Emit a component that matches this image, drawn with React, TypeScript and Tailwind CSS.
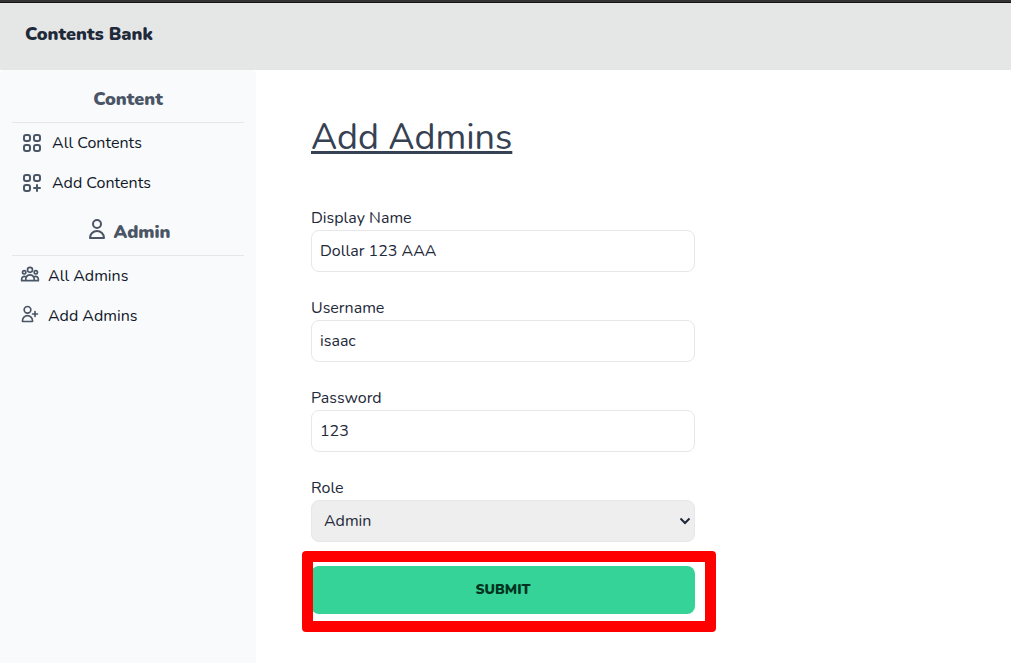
import type { ReactNode } from "react";
import {
  HiOutlineUser,
  HiOutlineUserAdd,
  HiOutlineUserGroup,
  HiOutlineViewGrid,
  HiOutlineViewGridAdd,
} from "react-icons/hi";

function SideHeading({ icon, children }: { icon?: ReactNode; children: ReactNode }) {
  return (
    <h2 className="flex items-center justify-center gap-1 border-b border-gray-200 pt-[13px] pb-[7px] text-lg/8 font-black text-gray-600">
      {icon}
      {children}
    </h2>
  );
}

function SideLink({ icon, children }: { icon: ReactNode; children: ReactNode }) {
  return (
    <li>
      <a href="#" className="flex h-10 items-center gap-2 px-2 text-gray-900">
        <span className="text-gray-600">{icon}</span>
        {children}
      </a>
    </li>
  );
}

function TextField({ id, label, value }: { id: string; label: string; value: string }) {
  return (
    <div className="flex flex-col">
      <label htmlFor={id}>{label}</label>
      <input
        id={id}
        type="text"
        defaultValue={value}
        className="rounded-lg border border-gray-200 bg-white p-2 outline-none"
      />
    </div>
  );
}

export default function App() {
  return (
    <div className="flex min-h-screen flex-col bg-white font-['Nunito','Open_Sans',sans-serif] text-base font-[440] text-gray-800">
      <div className="h-0.5 bg-[#353335]" />
      <header className="border-t border-[#151515] bg-[#e5e7e6] px-[25px] pt-[17px] pb-[22px]">
        <h1 className="text-lg/7 font-black">Contents Bank</h1>
      </header>
      <div className="flex grow">
        <aside className="w-64 shrink-0 rounded-t bg-[#f9fafc] px-3">
          <SideHeading>Content</SideHeading>
          <ul>
            <SideLink icon={<HiOutlineViewGrid size={24} />}>All Contents</SideLink>
            <SideLink icon={<HiOutlineViewGridAdd size={24} />}>Add Contents</SideLink>
          </ul>
          <SideHeading icon={<HiOutlineUser size={24} className="mb-1.5" />}>Admin</SideHeading>
          <ul>
            <SideLink icon={<HiOutlineUserGroup size={20} className="mb-1" />}>All Admins</SideLink>
            <SideLink icon={<HiOutlineUserAdd size={20} className="mb-1" />}>Add Admins</SideLink>
          </ul>
        </aside>
        <main className="grow px-[55px] pt-12">
          <h2 className="mb-12 text-4xl font-[440] text-gray-700 underline">Add Admins</h2>
          <form className="flex max-w-96 flex-col gap-6">
            <TextField id="display-name" label="Display Name" value="Dollar 123 AAA" />
            <TextField id="username" label="Username" value="isaac" />
            <TextField id="password" label="Password" value="123" />
            <div className="flex flex-col">
              <label htmlFor="role">Role</label>
              <div className="relative flex">
                <select
                  id="role"
                  className="grow appearance-none rounded-lg border border-gray-200 bg-[#eeeeee] py-2 pr-6 pl-3 outline-none"
                >
                  <option>Admin</option>
                </select>
                <svg
                  viewBox="0 0 12 8"
                  fill="none"
                  stroke="currentColor"
                  strokeWidth="2"
                  className="pointer-events-none absolute top-[17px] right-1 h-2 w-3"
                >
                  <path d="M1.5 1.5 6 6 10.5 1.5" />
                </svg>
              </div>
            </div>
            <div className="relative">
              <button
                type="button"
                className="h-12 w-full rounded-lg bg-[#36d399] text-sm font-black text-[#003320] uppercase"
              >
                Submit
              </button>
              <div className="pointer-events-none absolute -top-[15px] -right-[21px] -bottom-[18px] -left-[9px] rounded border-11 border-[#ff0000]" />
            </div>
          </form>
        </main>
      </div>
    </div>
  );
}
